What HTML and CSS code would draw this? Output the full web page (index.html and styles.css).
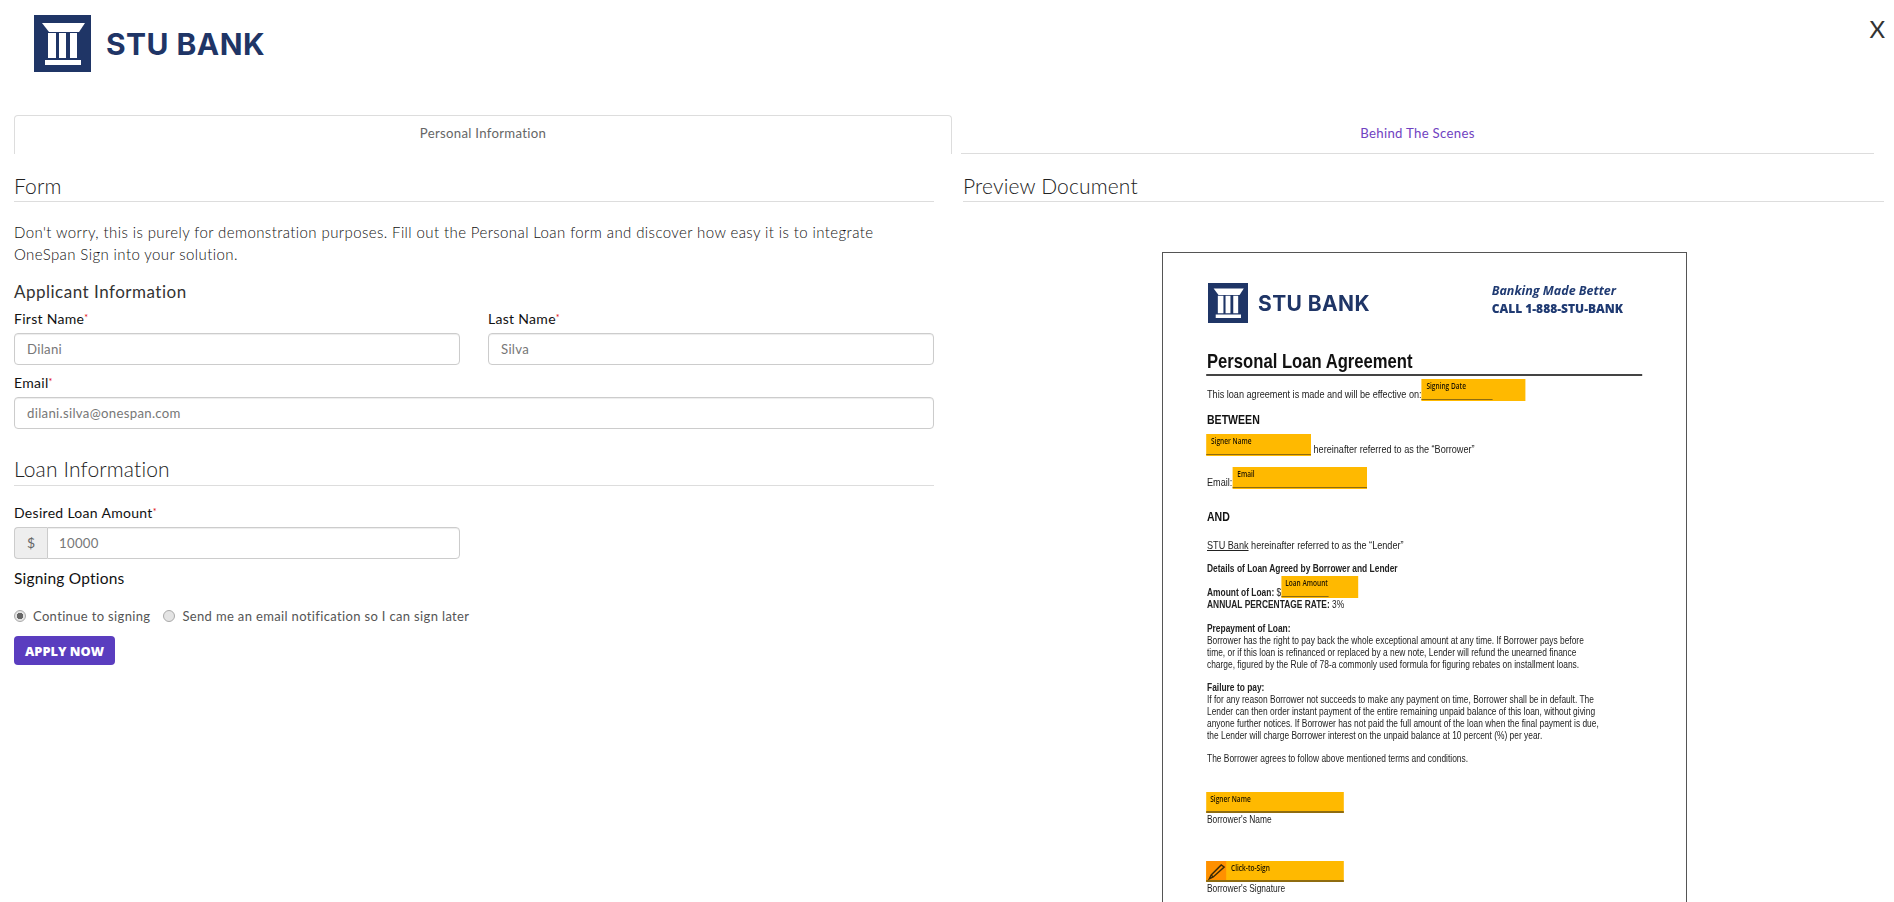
FILE: index.html
```html
<!DOCTYPE html>
<html lang="en">
<head>
    <meta charset="UTF-8">
    <meta name="viewport" content="width=device-width, initial-scale=1.0">
    <title>STU Bank - Personal Loan</title>
    <link rel="stylesheet" href="styles.css">
</head>
<body>
    <header class="top">
        <div class="brand">
            <svg class="brand-mark" viewBox="0 0 57 57">
                <rect width="57" height="57" fill="#1f3566"/>
                <path d="M8 8H51L45 17H15Z" fill="#fff"/>
                <path d="M14 18H22V43H14ZM25 18H32V43H25ZM36 18H43V43H36ZM11 45H47V50H11Z" fill="#fff"/>
            </svg>
            <span class="brand-name">STU BANK</span>
        </div>
        <button class="close">X</button>
    </header>

    <div class="tabs">
        <div class="tab active">Personal Information</div>
        <div class="tab other">Behind The Scenes</div>
    </div>

    <main class="panes">
        <section class="form-pane">
            <h2 class="section-title">Form</h2>
            <p class="intro">Don't worry, this is purely for demonstration purposes. Fill out the Personal Loan form and discover how easy it is to integrate OneSpan Sign into your solution.</p>
            <h3 class="sub-title">Applicant Information</h3>
            <div class="row">
                <div class="field">
                    <label>First Name<sup>*</sup></label>
                    <input type="text" value="Dilani">
                </div>
                <div class="field">
                    <label>Last Name<sup>*</sup></label>
                    <input type="text" value="Silva">
                </div>
            </div>
            <div class="field">
                <label>Email<sup>*</sup></label>
                <input type="text" value="dilani.silva@onespan.com">
            </div>

            <h2 class="section-title loan-title">Loan Information</h2>
            <div class="field half">
                <label>Desired Loan Amount<sup>*</sup></label>
                <div class="input-group">
                    <span class="addon">$</span>
                    <input type="text" value="10000">
                </div>
            </div>
            <h4 class="options-title">Signing Options</h4>
            <div class="radios">
                <label class="radio"><input type="radio" name="signing" checked>Continue to signing</label>
                <label class="radio"><input type="radio" name="signing">Send me an email notification so I can sign later</label>
            </div>
            <button class="apply">APPLY NOW</button>
        </section>

        <section class="preview-pane">
            <h2 class="section-title">Preview Document</h2>
            <div class="doc">
                <div class="doc-head">
                    <div class="doc-brand">
                        <svg class="doc-mark" viewBox="0 0 57 57">
                            <rect width="57" height="57" fill="#1f3566"/>
                            <path d="M8 8H51L45 17H15Z" fill="#fff"/>
                            <path d="M14 18H22V43H14ZM25 18H32V43H25ZM36 18H43V43H36ZM11 45H47V50H11Z" fill="#fff"/>
                        </svg>
                        <span class="doc-brand-name">STU BANK</span>
                    </div>
                    <div class="doc-tag">
                        <em>Banking Made Better</em>
                        <strong>CALL 1-888-STU-BANK</strong>
                    </div>
                </div>
                <div class="doc-body">
                    <h1 class="doc-title">Personal Loan Agreement</h1>
                    <p class="doc-line effective">This loan agreement is made and will be effective on:<span class="tag date"><span>Signing Date</span></span></p>
                    <h5 class="doc-heading between">BETWEEN</h5>
                    <p class="doc-line signer"><span class="tag name"><span>Signer Name</span></span> hereinafter referred to as the “Borrower”</p>
                    <p class="doc-line email">Email: <span class="tag mail"><span>Email</span></span></p>
                    <h5 class="doc-heading and">AND</h5>
                    <p class="doc-line lender"><u>STU Bank</u> hereinafter referred to as the “Lender”</p>
                    <p class="doc-small details"><b>Details of Loan Agreed by Borrower and Lender</b></p>
                    <p class="doc-small amount"><b>Amount of Loan:</b> $<span class="tag loan"><span>Loan Amount</span></span><br><b>ANNUAL PERCENTAGE RATE:</b> 3%</p>
                    <p class="doc-small prepay"><b>Prepayment of Loan:</b><br>Borrower has the right to pay back the whole exceptional amount at any time. If Borrower pays before<br>time, or if this loan is refinanced or replaced by a new note, Lender will refund the unearned finance<br>charge, figured by the Rule of 78-a commonly used formula for figuring rebates on installment loans.</p>
                    <p class="doc-small failure"><b>Failure to pay:</b><br>If for any reason Borrower not succeeds to make any payment on time, Borrower shall be in default. The<br>Lender can then order instant payment of the entire remaining unpaid balance of this loan, without giving<br>anyone further notices. If Borrower has not paid the full amount of the loan when the final payment is due,<br>the Lender will charge Borrower interest on the unpaid balance at 10 percent (%) per year.</p>
                    <p class="doc-small agrees">The Borrower agrees to follow above mentioned terms and conditions.</p>
                    <div class="sign-block first">
                        <div class="tag wide"><span>Signer Name</span></div>
                        <p class="doc-small">Borrower's Name</p>
                    </div>
                    <div class="sign-block second">
                        <div class="tag wide click">
                            <i class="pen">
                                <svg viewBox="0 0 20 21" preserveAspectRatio="none"><path d="M3 18L5 14L15 4L18 6L7 16Z" fill="none" stroke="#3a2a08" stroke-width="1.4"/><path d="M5 14L7 16" stroke="#3a2a08" stroke-width="1.2"/></svg>
                            </i>
                            <span>Click-to-Sign</span>
                        </div>
                        <p class="doc-small">Borrower's Signature</p>
                    </div>
                </div>
            </div>
        </section>
    </main>
</body>
</html>
```

FILE: styles.css
```css
* {
    box-sizing: border-box;
}

html, body {
    height: 100%;
    overflow: hidden;
}

body {
    margin: 0;
    font-family: 'Lato', 'Open Sans', sans-serif;
    color: #333;
    background-color: #fff;
}

/* Header */
.top {
    height: 115px;
    padding: 15px 9px 0 34px;
    display: flex;
    justify-content: space-between;
    align-items: flex-start;
}

.brand {
    display: flex;
    align-items: center;
}

.brand-mark {
    width: 57px;
    height: 57px;
}

.brand-name {
    margin-left: 15px;
    font-family: 'Inter', sans-serif;
    font-size: 30px;
    font-weight: 700;
    letter-spacing: 0.45px;
    color: #1f3566;
}

.close {
    padding: 0;
    border: 0;
    background: none;
    font-family: 'Lato', sans-serif;
    font-weight: 400;
    font-size: 24px;
    line-height: 28px;
    color: #333;
}

/* Tabs */
.tabs {
    display: flex;
    padding: 0 20px 0 14px;
    gap: 9px;
}

.tab {
    flex: 1;
    height: 39px;
    text-align: center;
    font-size: 13.2px;
    line-height: 37px;
    letter-spacing: 0.3px;
}

.tab.active {
    flex: 0 0 938px;
    border: 1px solid #ddd;
    border-bottom: 0;
    border-radius: 4px 4px 0 0;
    line-height: 35px;
    color: #666;
}

.tab.other {
    border-bottom: 1px solid #ddd;
    color: #6f42c1;
}

/* Panes */
.panes {
    display: flex;
    padding: 0 10px 0 14px;
    gap: 29px;
}

.form-pane {
    width: 920px;
}

.preview-pane {
    flex: 1;
}

.section-title {
    margin: 0;
    height: 48px;
    padding-top: 19px;
    font-size: 21px;
    line-height: 26px;
    font-weight: 300;
    letter-spacing: 0.15px;
    color: #222;
    border-bottom: 1px solid #ddd;
}

.intro {
    margin: 19px 0 0;
    font-size: 15px;
    line-height: 22px;
    font-weight: 300;
    letter-spacing: 0.4px;
    color: #111;
}

.sub-title {
    margin: 15px 0 0;
    font-size: 17px;
    line-height: 24px;
    font-weight: 400;
    letter-spacing: 0.5px;
}

.row {
    display: flex;
    gap: 28px;
    margin-top: 5px;
}

.row .field {
    flex: 1;
}

.field {
    margin-bottom: 8px;
}

.field label {
    display: block;
    font-size: 14px;
    line-height: 20px;
    font-weight: 400;
    letter-spacing: 0.3px;
    color: #111;
    margin-bottom: 4px;
}

.field sup {
    color: #e0000a;
    font-size: 9px;
    line-height: 0;
    vertical-align: 3px;
}

.field.half {
    width: 446px;
}

input[type="text"] {
    display: block;
    width: 100%;
    height: 32px;
    padding: 0 12px;
    border: 1px solid #ccc;
    border-radius: 4px;
    font-family: inherit;
    font-size: 13.2px;
    font-weight: 400;
    letter-spacing: 0.3px;
    color: #777;
    box-shadow: inset 0 1px 1px rgba(0,0,0,0.075);
}

.loan-title {
    height: 49px;
    margin-top: 2px;
    margin-bottom: 17px;
}

.input-group {
    display: flex;
}

.addon {
    width: 33px;
    height: 32px;
    line-height: 30px;
    text-align: center;
    font-size: 14px;
    color: #666;
    background-color: #eee;
    border: 1px solid #ccc;
    border-right: 0;
    border-radius: 4px 0 0 4px;
}

.input-group input[type="text"] {
    flex: 1;
    border-radius: 0 4px 4px 0;
    padding-left: 11px;
}

.options-title {
    margin: 3px 0 0;
    font-size: 15.5px;
    line-height: 22px;
    font-weight: 400;
    letter-spacing: 0.2px;
    color: #111;
}

.radios {
    display: flex;
    margin-top: 17px;
    gap: 13px;
}

.radio {
    display: flex;
    align-items: center;
    font-size: 13px;
    line-height: 20px;
    letter-spacing: 0.35px;
    color: #555;
}

.radio input {
    appearance: none;
    width: 12px;
    height: 12px;
    margin: 0 7px 0 0;
    border: 1px solid #aaa;
    border-radius: 50%;
    background-color: #e4e4e4;
}

.radio input:checked {
    background: radial-gradient(circle, #666 0 3px, #e4e4e4 3.5px);
}

.apply {
    display: block;
    margin-top: 10px;
    width: 101px;
    height: 29px;
    border: 0;
    border-radius: 4px;
    font-family: 'Open Sans', sans-serif;
    font-size: 12.8px;
    font-weight: 800;
    color: #fff;
    background-color: #5a3dbf;
}

/* Document picture on the right */
.doc {
    width: 525px;
    height: 680px;
    margin: 50px 0 0 199px;
    padding: 30px 44px 0 44px;
    border: 1px solid #555;
    font-family: 'Liberation Sans', Arial, sans-serif;
    color: #222;
    white-space: nowrap;
}

/* the original is a scaled image, so everything in it is a bit soft */
.doc > * {
    filter: blur(0.3px);
}

.doc-head {
    display: flex;
    justify-content: space-between;
}

.doc-brand {
    display: flex;
    align-items: center;
    margin-left: 1px;
}

.doc-mark {
    width: 40px;
    height: 40px;
}

.doc-brand-name {
    margin-left: 10px;
    font-family: 'Inter', sans-serif;
    font-size: 21px;
    font-weight: 700;
    letter-spacing: 0.4px;
    color: #1f3566;
}

.doc-tag {
    display: flex;
    flex-direction: column;
    margin: -1px 19px 0 0;
    font-family: 'Open Sans', sans-serif;
    font-size: 12.5px;
    line-height: 18px;
    font-weight: 700;
    color: #1f3a72;
}

.doc-tag strong {
    font-size: 12px;
}

/* the agreement text is set in a condensed face, squeeze the whole body.
   widths inside are in squeezed units: real width / 0.8 */
.doc-body {
    width: 125%;
    transform: scaleX(0.8);
    transform-origin: left top;
}

.doc-title {
    margin: 23px 0 0 -1px;
    height: 30px;
    padding-left: 1px;
    font-size: 20.8px;
    line-height: 29px;
    color: #111;
    border-bottom: 2px solid #444;
}

.doc-line {
    margin: 0;
    font-size: 11.4px;
    line-height: 14px;
}

.doc-small {
    margin: 0;
    font-size: 10.5px;
    line-height: 12px;
}

.doc-heading {
    margin: 0;
    font-size: 13.2px;
    line-height: 15px;
    color: #111;
}

.tag {
    position: relative;
    display: inline-block;
    height: 22px;
    vertical-align: bottom;
    background-color: #ffb900;
    color: #1a1200;
    font-family: 'Open Sans', sans-serif;
    font-size: 8.2px;
    font-weight: 600;
    line-height: 14px;
    padding-left: 6px;
}

.tag span {
    display: block;
}

.tag::after {
    content: "";
    position: absolute;
    left: 0;
    bottom: 1px;
    height: 1px;
    background-color: #8f6c10;
}

.effective {
    margin-top: 3px;
}

.tag.date {
    width: 130px;
}

.tag.date::after {
    width: 89px;
}

.between {
    margin-top: 11px;
}

.signer {
    margin-top: 7px;
}

.tag.name {
    width: 131px;
    margin-left: -1px;
}

.tag.name::after {
    width: 100%;
}

.email {
    margin-top: 11px;
}

.tag.mail {
    width: 168px;
    margin-left: -3px;
}

.tag.mail::after {
    width: 100%;
}

.and {
    margin-top: 20px;
}

.lender {
    margin-top: 14px;
}

.details {
    margin-top: 10px;
}

.amount {
    margin-top: 2px;
}

.tag.loan {
    width: 96px;
    padding-left: 5px;
}

.tag.loan::after {
    width: 59px;
}

.prepay {
    margin-top: 12px;
}

.failure {
    margin-top: 11px;
}

.agrees {
    margin-top: 11px;
}

.sign-block.first {
    margin-top: 28px;
}

.sign-block.second {
    margin-top: 36px;
}

.tag.wide {
    display: block;
    width: 172px;
    height: 21px;
    margin-left: -1px;
    padding-left: 5px;
}

.tag.wide::after {
    width: 100%;
    height: 2px;
    bottom: 0;
}

.tag.click {
    display: flex;
    padding-left: 0;
}

.pen {
    display: block;
    width: 25px;
    height: 21px;
    background-color: #ff9000;
    margin-right: 6px;
}

.pen svg {
    display: block;
    width: 100%;
    height: 100%;
}
```
